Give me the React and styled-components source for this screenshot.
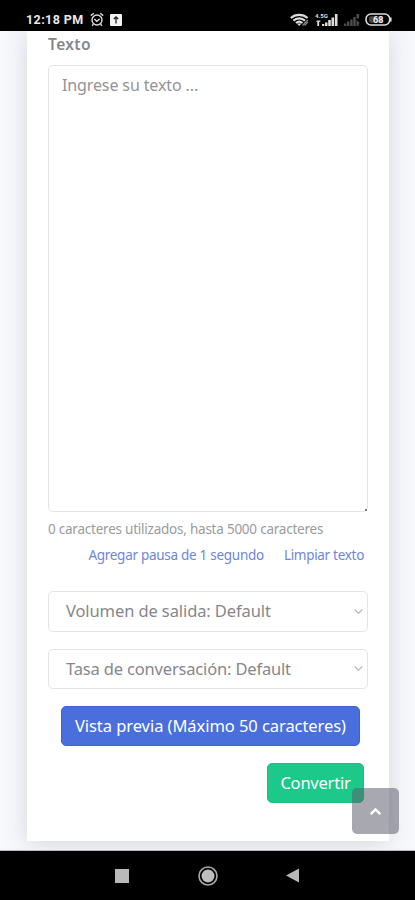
import React from 'react';
import styled, { createGlobalStyle } from 'styled-components';

const GlobalStyle = createGlobalStyle`
  * {
    box-sizing: border-box;
  }

  body {
    margin: 0;
    background: #f5f6fb;
    font-family: 'Noto Sans', 'Open Sans', sans-serif;
  }
`;

const Screen = styled.div`
  position: relative;
  display: flex;
  flex-direction: column;
  width: 415px;
  height: 900px;
  overflow: hidden;
  background: #f8f9fd;
`;

const StatusBar = styled.header`
  display: flex;
  align-items: center;
  justify-content: space-between;
  flex: none;
  height: 31px;
  padding: 8px 23px 0 26px;
  background: #000;
  color: #e8e8e8;
  z-index: 1;
`;

const StatusGroup = styled.div`
  display: flex;
  align-items: center;
  gap: ${(props) => props.$gap}px;
`;

const Clock = styled.span`
  font-family: Roboto, sans-serif;
  font-size: 12.5px;
  font-weight: 700;
  line-height: 16px;
  letter-spacing: 0.4px;
  white-space: nowrap;
`;

const Content = styled.main`
  flex: none;
  height: 820px;
  padding: 0 26px 10px 27px;
  border-bottom: 1px solid #b9b9bc;
  overflow: hidden;
`;

const Card = styled.section`
  display: flex;
  flex-direction: column;
  height: 810px;
  padding: 2px 21px 0;
  background: #fff;
  box-shadow: 0 2px 24px rgba(58, 59, 69, 0.19);
`;

const Line = styled.span`
  display: block;
  white-space: nowrap;
  font-size: ${(props) => props.$size}px;
  letter-spacing: ${(props) => props.$track || 0}px;
`;

const Label = styled.label`
  height: 32px;
  line-height: 22px;
  color: #858689;
  font-weight: 600;
`;

const TextBox = styled.div`
  position: relative;
  flex: none;
  height: 447px;
  padding: 7px 13px;
  border: 1px solid #e3e4e7;
  border-radius: 5px;
  line-height: 24px;
  color: #939498;
`;

const Grip = styled.i`
  position: absolute;
  right: 0;
  bottom: 0;
  width: 2px;
  height: 2px;
  background: #77777a;
`;

const Counter = styled.div`
  margin-top: 6px;
  line-height: 22px;
  color: #9a9b9f;
`;

const Links = styled.div`
  display: flex;
  justify-content: flex-end;
  gap: 20px;
  height: 22px;
  margin: 4px 4px 25px 0;
  line-height: 22px;
  color: #6f86dc;
`;

const Select = styled.div`
  display: flex;
  align-items: center;
  justify-content: space-between;
  flex: none;
  height: ${(props) => props.$height}px;
  margin-bottom: 17px;
  padding: 0 4px 1px 17px;
  border: 1px solid #e3e4e7;
  border-radius: 5px;
  line-height: 24px;
  color: #86878b;
`;

const Button = styled.button`
  display: flex;
  align-items: center;
  justify-content: center;
  flex: none;
  align-self: flex-end;
  width: ${(props) => props.$width}px;
  height: 40px;
  margin: 0 ${(props) => props.$right}px 17px 0;
  padding: 0;
  border: 1px solid ${(props) => props.$border};
  border-radius: 5px;
  background: ${(props) => props.$color};
  color: #fff;
  font-family: inherit;
  line-height: 24px;
`;

const ScrollTop = styled.button`
  position: absolute;
  left: 352px;
  top: 788px;
  display: flex;
  align-items: center;
  justify-content: center;
  width: 47px;
  height: 46px;
  padding: 0;
  border: 0;
  border-radius: 5px;
  background: rgba(90, 92, 105, 0.53);
`;

const NavBar = styled.nav`
  display: flex;
  align-items: center;
  flex: 1;
  padding-left: 115px;
  background: #000;
`;

const NavIcon = styled.svg`
  display: block;
  margin-right: ${(props) => props.$after || 0}px;
`;

const AlarmIcon = () => (
  <svg width="14" height="15" viewBox="0 0 14 15" fill="none" stroke="#ddd" strokeWidth="1.4">
    <circle cx="7" cy="8" r="5" />
    <path d="M.8 3.6 3.8 1.2M13.2 3.6 10.2 1.2M4.4 7 6.8 9.3 9.6 7M3.3 12.2 2.2 13.8M10.7 12.2l1.1 1.6" />
  </svg>
);

const UploadIcon = () => (
  <svg width="12" height="12" viewBox="0 0 12 12">
    <rect width="12" height="12" rx="1" fill="#f2f2f2" />
    <path d="M6 9.5V3M3.8 5 6 2.8 8.2 5" fill="none" stroke="#222" strokeWidth="1.3" />
  </svg>
);

const WifiIcon = () => (
  <svg width="20" height="14" viewBox="0 0 20 14" fill="none" stroke="#ddd" strokeWidth="2.1">
    <path d="M.8 5C5.5.8 12.8.8 17.6 5M3.4 7.6c3.4-3 8.2-3 11.6 0M6 10c1.9-1.6 4.6-1.6 6.4 0" />
    <path d="M7 10.5h4.4L9.2 13z" fill="#ddd" stroke="none" />
    <path d="M12.5 12.5 17.8 7M14.5 12.5l3.6-3.6" stroke="#888" strokeWidth="1.2" />
  </svg>
);

const SignalIcon = () => (
  <svg width="24" height="14" viewBox="0 0 24 14" fill="#ddd">
    <text x="0" y="5" fontFamily="Roboto, sans-serif" fontSize="6" fontWeight="700" textLength="13" lengthAdjust="spacingAndGlyphs">4.5G</text>
    <path d="M2 7.5h3.3v1.3H4.1V13H2.3V8.8H1zM7 11h2.3v2H7zM10 9.5h2.5V13H10zM13.2 7h2.6v6h-2.6zM16.5 4.5h2.6V13h-2.6zM19.9 1h2.6v12h-2.6z" />
  </svg>
);

const WeakSignalIcon = () => (
  <svg width="16" height="13" viewBox="0 0 16 13" fill="#4d4d4d">
    <path d="M0 10.5h2.3V13H0zM3 8.5h2.4V13H3zM6.2 6.5h2.4V13H6.2zM9.3 4h2.4v9H9.3zM12.5 1h2.6v4.5h-2.6zM12.5 7l2.7 2.5v1l-1 2.5h-1.7z" />
  </svg>
);

const BatteryIcon = () => (
  <svg width="27" height="13" viewBox="0 0 27 13">
    <rect x="1" y="1" width="23.7" height="11" rx="5" fill="none" stroke="#ddd" strokeWidth="1.6" />
    <path d="M25.8 4.5v4" stroke="#ddd" strokeWidth="1.6" />
    <rect x="4" y="3.3" width="14" height="6.5" rx="2" fill="#777" opacity=".6" />
    <text x="8" y="9.8" fontFamily="Roboto, sans-serif" fontSize="9" fontWeight="700" fill="#eee">68</text>
  </svg>
);

const Chevron = () => (
  <svg width="9" height="7" viewBox="0 0 9 7" fill="none" stroke="#b6b7bb" strokeWidth="1.1">
    <path d="m.7 1.5 3.8 3.7 3.8-3.7" />
  </svg>
);

const App = () => (
  <>
    <GlobalStyle />
    <Screen>
      <StatusBar>
        <StatusGroup $gap={6}>
          <Clock>12:18 PM</Clock>
          <AlarmIcon />
          <UploadIcon />
        </StatusGroup>
        <StatusGroup $gap={5}>
          <WifiIcon />
          <SignalIcon />
          <WeakSignalIcon />
          <BatteryIcon />
        </StatusGroup>
      </StatusBar>

      <Content>
        <Card>
          <Label>
            <Line $size={15.5} $track={0.4}>Texto</Line>
          </Label>
          <TextBox>
            <Line $size={16} $track={-0.12}>Ingrese su texto ...</Line>
            <Grip />
          </TextBox>
          <Counter>
            <Line $size={13.5} $track={-0.23}>0 caracteres utilizados, hasta 5000 caracteres</Line>
          </Counter>
          <Links>
            <Line $size={13.5} $track={-0.28}>Agregar pausa de 1 segundo</Line>
            <Line $size={13.5} $track={-0.3}>Limpiar texto</Line>
          </Links>
          <Select $height={41}>
            <Line $size={16.5} $track={-0.1}>Volumen de salida: Default</Line>
            <Chevron />
          </Select>
          <Select $height={40}>
            <Line $size={16.5} $track={-0.17}>Tasa de conversación: Default</Line>
            <Chevron />
          </Select>
          <Button $width={299} $right={8} $color="#4a6fdd" $border="#3f63d3">
            <Line $size={16.5} $track={-0.06}>Vista previa (Máximo 50 caracteres)</Line>
          </Button>
          <Button $width={97} $right={4} $color="#1cc88a" $border="#18c283">
            <Line $size={16.5} $track={-0.22}>Convertir</Line>
          </Button>
        </Card>
      </Content>

      <ScrollTop>
        <svg width="13" height="9" viewBox="0 0 13 9" fill="none" stroke="#fff" strokeWidth="2.4">
          <path d="m1.7 7.2 4.8-4.7 4.8 4.7" />
        </svg>
      </ScrollTop>

      <NavBar>
        <NavIcon width="14" height="14" $after={69}>
          <rect width="14" height="14" fill="#b9b9b9" />
        </NavIcon>
        <NavIcon width="20" height="20" viewBox="0 0 20 20" $after={68}>
          <circle cx="10" cy="10" r="9" fill="none" stroke="#aaa" strokeWidth="1.6" />
          <circle cx="10" cy="10" r="6.5" fill="#bdbdbd" />
        </NavIcon>
        <NavIcon width="14" height="15" viewBox="0 0 14 15">
          <path d="M0 7.5 13 .5v14z" fill="#b9b9b9" />
        </NavIcon>
      </NavBar>
    </Screen>
  </>
);

export default App;
